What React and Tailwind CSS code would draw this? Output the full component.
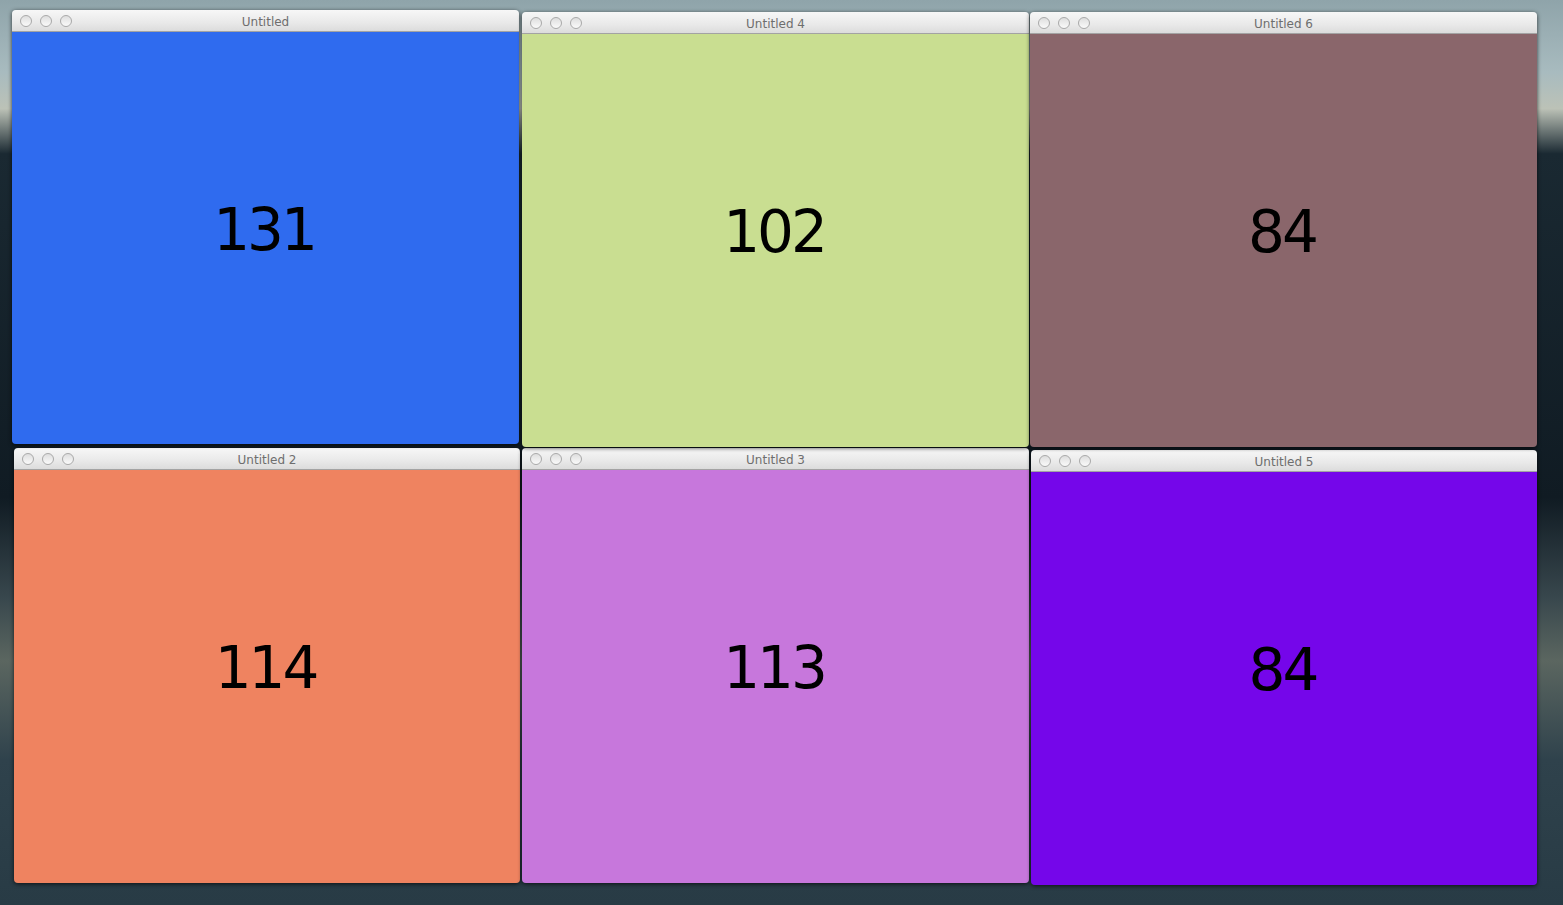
import React from 'react';

const windows = [
  { title: 'Untitled 2', num: '114', pos: 'left-[14px] top-[448px] w-[506px] h-[435px]', bg: 'bg-[#ef8360]' },
  { title: 'Untitled 3', num: '113', pos: 'left-[522px] top-[448px] w-[507px] h-[435px]', bg: 'bg-[#c777dc]' },
  { title: 'Untitled 5', num: '84', pos: 'left-[1031px] top-[450px] w-[506px] h-[435px]', bg: 'bg-[#7506ea]' },
  { title: 'Untitled', num: '131', pos: 'left-[12px] top-[10px] w-[507px] h-[434px]', bg: 'bg-[#2f6bef]' },
  { title: 'Untitled 4', num: '102', pos: 'left-[522px] top-[12px] w-[507px] h-[435px]', bg: 'bg-[#c9de91]' },
  { title: 'Untitled 6', num: '84', pos: 'left-[1030px] top-[12px] w-[507px] h-[435px]', bg: 'bg-[#8a666b]' },
];

function TrafficLight() {
  return (
    <span className="w-[12px] h-[12px] rounded-full border border-[#a9a9a9] bg-[linear-gradient(to_bottom,#dedede,#fafafa)]" />
  );
}

function Window({ title, num, pos, bg }) {
  return (
    <div className={`absolute ${pos} flex flex-col rounded-[4px] overflow-hidden shadow-[0_1px_4px_rgba(0,0,0,0.7)]`}>
      <div className="relative h-[22px] shrink-0 flex items-center px-[8px] gap-[8px] border-b border-[#a3a3a3] bg-[linear-gradient(to_bottom,#f7f7f7,#e9e9e9_60%,#dcdcdc)]">
        <TrafficLight />
        <TrafficLight />
        <TrafficLight />
        <span className="absolute inset-x-0 top-[1px] h-[21px] flex items-center justify-center text-[12px] text-[#6e6e6e] font-['DejaVu_Sans',sans-serif] pointer-events-none">
          {title}
        </span>
      </div>
      <div className={`flex-1 flex items-center justify-center pb-[17px] ${bg}`}>
        <span className="text-[58px] leading-none tracking-[-3px] pr-[3px] text-black font-['DejaVu_Sans',sans-serif]">{num}</span>
      </div>
    </div>
  );
}

export default function App() {
  return (
    <div className="relative w-[1563px] h-[905px] overflow-hidden bg-[linear-gradient(to_bottom,#8fa4aa_0%,#a8bbbf_8%,#bcc2b7_12%,#1a2932_17%,#101b23_55%,#38474d_66%,#5b6660_73%,#2f424c_84%,#283b45_100%)]">
      {windows.map((w) => (
        <Window key={w.title} {...w} />
      ))}
    </div>
  );
}
